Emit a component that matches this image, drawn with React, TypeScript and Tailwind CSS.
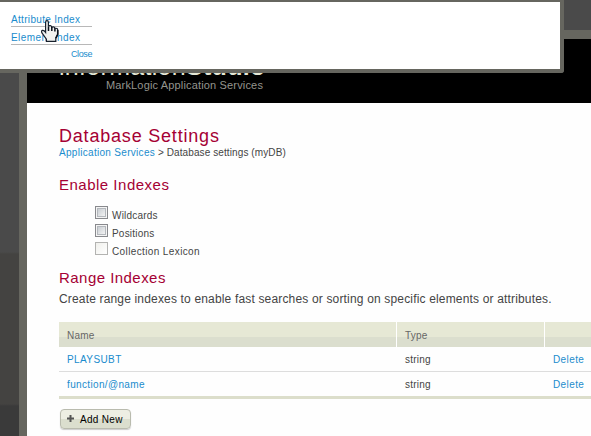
import React from 'react';

const rows = [
  { name: 'PLAYSUBT', type: 'string', nameSpacing: 'tracking-[0.4px]' },
  { name: 'function/@name', type: 'string', nameSpacing: 'tracking-[0.35px]' },
];

function Checkbox({ disabled = false }: { disabled?: boolean }) {
  if (disabled) {
    return <span className="h-[13px] w-[13px] border border-[#b3b3b1] bg-gradient-to-br from-[#f0f0ec] to-white" />;
  }
  return (
    <span className="flex h-[13px] w-[13px] items-center justify-center border border-[#88898d] bg-[#f4f4f4]">
      <span className="h-[9px] w-[9px] border border-[#b4b8bd] bg-gradient-to-br from-[#c9ced3] to-[#f3f3f3]" />
    </span>
  );
}

function Option({ label, disabled, spacing }: { label: string; disabled?: boolean; spacing: string }) {
  return (
    <label className="flex h-[18px] items-start gap-[4px]">
      <Checkbox disabled={disabled} />
      <span className={`mt-[4px] whitespace-nowrap text-[10px] leading-[12px] text-[#444] ${spacing}`}>{label}</span>
    </label>
  );
}

function HandCursor() {
  return (
    <svg className="absolute left-[41px] top-[18px]" width="18" height="23" viewBox="0 0 18 23">
      <path
        d="M4.6 2.2 Q4.6 .7 6 .7 Q7.4 .7 7.4 2.2 V6.6 Q8 5.4 9.3 5.7 Q10.6 6 10.8 7.2 Q13.2 6.2 13.9 8.3 Q16.6 7.9 16.8 10.3 V14.4 L14.8 18.2 V21.4 H5.4 V19.2 L1.1 13.2 Q-.1 11 1.3 10.4 Q2.9 9.8 4.6 12.3 Z"
        fill="#f2f2f0"
        stroke="#17202c"
        strokeWidth="1.2"
      />
      <path
        d="M7.5 6.5 V11 M10.8 7 V11 M13.9 8.3 V11.6 M16.7 10 V14.4 L14.8 18.2"
        fill="none"
        stroke="#0a111c"
        strokeWidth="1.5"
      />
    </svg>
  );
}

export default function App() {
  return (
    <div className="relative h-[436px] w-[591px] overflow-hidden bg-[linear-gradient(#4a4a4a_0px,#4a4a4a_252px,#444341_254px,#444341_404px,#3a3a3a_406px)] pl-[19px] pt-[30px] font-['Liberation_Sans',Arial,sans-serif]">
      <main className="h-[406px] w-[572px] border-l-[8px] border-t-[9px] border-[#66665f] bg-[#fefefe] text-[#444]">
        <header className="h-[64px] overflow-hidden bg-black pl-[32px] pt-[16px]">
          <div className="h-[24px] whitespace-nowrap text-[25px] leading-[22px] tracking-[0.3px] text-[#e6e8d6]">
            information<b>Studio</b>
          </div>
          <div className="ml-[47px] h-[12px] whitespace-nowrap text-[11px] leading-[12px] tracking-[0.16px] text-[#94948e]">
            MarkLogic Application Services
          </div>
        </header>

        <div className="flex flex-col pl-[32px]">
          <h1 className="mt-[23px] h-[20px] whitespace-nowrap text-[18px] leading-[20px] tracking-[0.8px] text-[#a50034]">
            Database Settings
          </h1>
          <nav className="mt-[1px] h-[12px] whitespace-nowrap text-[10px] leading-[12px] tracking-[0.1px]">
            <a className="tracking-[0.3px] text-[#1a8ccd]">Application Services</a> &gt; Database settings (myDB)
          </nav>

          <h2 className="mt-[16px] h-[20px] whitespace-nowrap text-[15px] leading-[20px] tracking-[0.5px] text-[#a50034]">
            Enable Indexes
          </h2>
          <div className="ml-[36px] mt-[11px] flex flex-col">
            <Option label="Wildcards" spacing="tracking-[0.2px]" />
            <Option label="Positions" spacing="tracking-[0.2px]" />
            <Option label="Collection Lexicon" disabled spacing="tracking-[0.38px]" />
          </div>

          <h2 className="mt-[8px] h-[20px] whitespace-nowrap text-[15px] leading-[20px] tracking-[0.46px] text-[#a50034]">
            Range Indexes
          </h2>
          <p className="mt-[3px] h-[16px] whitespace-nowrap text-[12px] leading-[16px] tracking-[0.166px]">
            Create range indexes to enable fast searches or sorting on specific elements or attributes.
          </p>

          <section className="mt-[15px] border-b-[3px] border-[#dcdecb] text-[10px]">
            <div className="grid h-[25px] grid-cols-[337px_148px_1fr] bg-[linear-gradient(#e6e8d5_15px,#dbdece_15px)] leading-[27px] tracking-[0.2px] text-[#666]">
              <span className="pl-[8px]">Name</span>
              <span className="border-l border-white pl-[8px]">Type</span>
              <span className="border-l border-white" />
            </div>
            {rows.map((row, i) => (
              <div
                key={row.name}
                className={`grid grid-cols-[337px_148px_1fr] tracking-[0.2px] ${i === 0 ? 'h-[25px] border-b border-[#ddd] leading-[25px]' : 'h-[24px] leading-[25px]'}`}
              >
                <a className={`pl-[8px] text-[#1a8ccd] ${row.nameSpacing}`}>{row.name}</a>
                <span className="pl-[9px]">{row.type}</span>
                <a className="pl-[9px] tracking-[0.4px] text-[#1a8ccd]">Delete</a>
              </div>
            ))}
          </section>

          <button className="ml-[1px] mt-[10px] flex h-[20px] w-[71px] items-center rounded-[4px] border border-[#b9bbae] bg-[linear-gradient(#edeee3_9px,#dbdece_9px)] pl-[6px] text-black shadow-[0_1px_1px_#ccc]">
            <svg width="7" height="7" viewBox="0 0 7 7" className="mb-[1px]">
              <path d="M3.5 0V7M0 3.5H7" stroke="#555" strokeWidth="2" />
            </svg>
            <span className="ml-[6px] mt-[1px] whitespace-nowrap text-[10px] leading-[18px] tracking-[0.3px]">Add New</span>
          </button>
        </div>
      </main>

      <div className="absolute left-0 top-0 flex h-[73px] w-[564px] flex-col rounded-br-[3px] border-b-[4px] border-r-[4px] border-t-[2px] border-[#66665f] bg-white pl-[11px] pt-[11px] text-[10px] text-[#1a8ccd]">
        <a className="h-[14px] w-[81px] whitespace-nowrap border-b border-[#b8b8b8] leading-[14px] tracking-[0.32px]">Attribute Index</a>
        <a className="mt-[4px] h-[14px] w-[81px] whitespace-nowrap border-b border-[#b8b8b8] leading-[14px] tracking-[0.42px]">Element Index</a>
        <a className="mt-[3px] w-[81px] text-right text-[9px] leading-[12px] tracking-[-0.4px]">Close</a>
        <HandCursor />
      </div>
    </div>
  );
}
